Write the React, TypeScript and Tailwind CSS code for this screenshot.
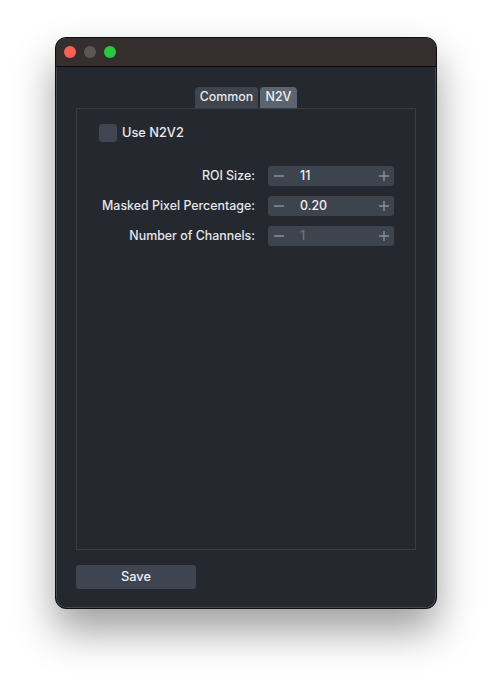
import React from "react";

const font = { fontFamily: "Inter, 'Noto Sans', 'Liberation Sans', sans-serif" };

function Spin({ value, disabled }: { value: string; disabled?: boolean }) {
  return (
    <div className="flex h-[20px] w-[126px] shrink-0 items-center rounded-[3px] bg-[#3e444e] pl-[5px] pr-[4px]">
      <svg width="12" height="12" viewBox="0 0 12 12" className="shrink-0">
        <line x1="1" y1="6" x2="11" y2="6" stroke="#8a9099" strokeWidth="1.4" />
      </svg>
      <span
        className={`ml-[15px] flex-1 text-[12.4px] font-medium leading-none ${disabled ? "text-[#6d737c]" : "text-[#eceef1]"}`}
      >
        {value}
      </span>
      <svg width="12" height="12" viewBox="0 0 12 12" className="shrink-0">
        <line x1="1" y1="6" x2="11" y2="6" stroke="#8a9099" strokeWidth="1.4" />
        <line x1="6" y1="1" x2="6" y2="11" stroke="#8a9099" strokeWidth="1.4" />
      </svg>
    </div>
  );
}

function Row({ label, value, disabled }: { label: string; value: string; disabled?: boolean }) {
  return (
    <div className="flex h-[20px] items-center justify-end">
      <div className="mr-[13px] whitespace-nowrap text-right text-[12.4px] font-medium text-[#e4e6ea]">{label}</div>
      <Spin value={value} disabled={disabled} />
    </div>
  );
}

export default function App() {
  return (
    <div className="min-h-[683px] w-[492px] bg-white pl-[55px] pt-[37px]" style={font}>
      <div className="flex h-[572px] w-[382px] flex-col overflow-hidden rounded-[11px] border border-[#0e0e0f] bg-[#262830] shadow-[0_22px_40px_rgba(0,0,0,0.38),inset_0_0_0_1px_rgba(255,255,255,0.14)]">
        <div className="flex h-[29px] shrink-0 items-center gap-[8px] border-b border-[#0c0c0c] bg-[#342f2e] pl-[8px]">
          <span className="h-[12px] w-[12px] rounded-full bg-[#fe5f57]" />
          <span className="h-[12px] w-[12px] rounded-full bg-[#5b5756]" />
          <span className="h-[12px] w-[12px] rounded-full bg-[#28c840]" />
        </div>
        <div className="flex flex-1 flex-col px-[20px] pt-[20px] pb-[18px]">
          <div className="flex justify-center gap-[2px]">
            <div className="flex h-[21px] w-[63px] items-center justify-center rounded-t-[4px] bg-[#3f444d] text-[12.4px] font-medium text-[#e6e8eb]">
              Common
            </div>
            <div className="flex h-[21px] w-[37px] items-center justify-center rounded-t-[4px] bg-[#5c6470] text-[12.4px] font-medium text-[#eef0f3]">
              N2V
            </div>
          </div>
          <div className="flex h-[442px] flex-col border border-[#393d46] pl-[22px] pr-[21px] pt-[14px]">
            <div className="flex items-center gap-[5px]">
              <div className="h-[18px] w-[18px] rounded-[3px] bg-[#404652]" />
              <span className="text-[12.8px] font-medium text-[#e8eaed]">Use N2V2</span>
            </div>
            <div className="mt-[24px] flex flex-col gap-[10px]">
              <Row label="ROI Size:" value="11" />
              <Row label="Masked Pixel Percentage:" value="0.20" />
              <Row label="Number of Channels:" value="1" disabled />
            </div>
          </div>
          <div className="mt-[15px] flex h-[24px] w-[120px] items-center justify-center rounded-[3px] bg-[#3f4550] text-[12.8px] font-medium text-[#eceef1]">
            Save
          </div>
        </div>
      </div>
    </div>
  );
}
